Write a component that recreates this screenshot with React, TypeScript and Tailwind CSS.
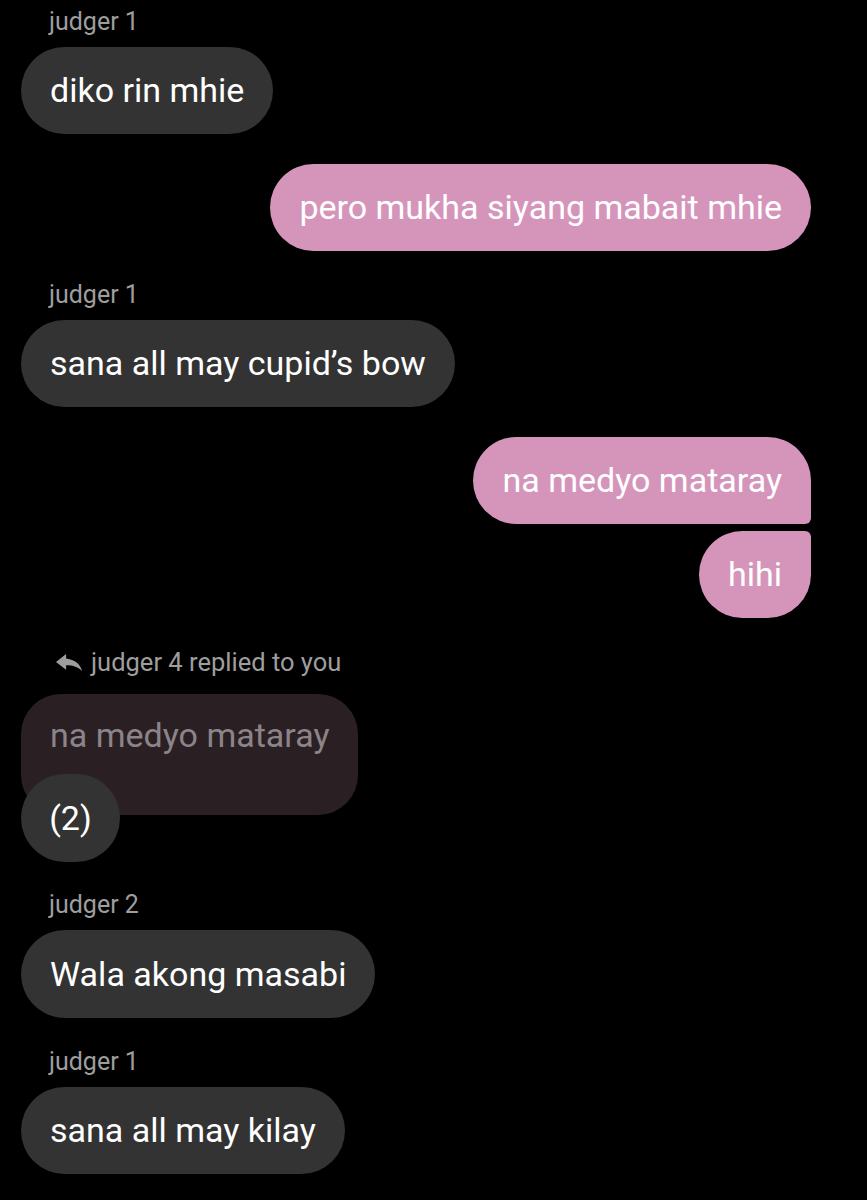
import React from 'react';

const Label = ({ children }: { children: React.ReactNode }) => (
  <div className="pl-[49px] text-[25px] leading-[28px] text-[#9e9e9e]">{children}</div>
);

const InBubble = ({ text, tall }: { text: string; tall?: boolean }) => (
  <div className={`self-start ml-[21px] flex items-center px-[29px] rounded-[44px] bg-[#333333] text-white text-[34px] whitespace-nowrap ${tall ? 'h-[88px]' : 'h-[87px]'}`}>
    {text}
  </div>
);

const OutBubble = ({ text, shape }: { text: string; shape?: 'first' | 'last' }) => {
  const corners =
    shape === 'first'
      ? 'rounded-[44px] rounded-br-[6px]'
      : shape === 'last'
        ? 'rounded-[44px] rounded-tr-[6px]'
        : 'rounded-[44px]';
  return (
    <div className={`self-end mr-[56px] h-[87px] flex items-center px-[29px] bg-[#d595bb] text-white text-[34px] whitespace-nowrap ${corners}`}>
      {text}
    </div>
  );
};

const ReplyIcon = () => (
  <svg width="26" height="17" viewBox="3 5 18 15" preserveAspectRatio="none" fill="#9e9e9e">
    <path d="M10 9V5l-7 7 7 7v-4.1c5 0 8.5 1.6 11 5.1-1-5-4-10-11-11z" />
  </svg>
);

export default function App() {
  return (
    <div className="w-[867px] h-[1200px] bg-black overflow-hidden flex flex-col pt-[8px]" style={{ fontFamily: 'Roboto, "Noto Sans", sans-serif' }}>
      <Label>judger 1</Label>
      <div className="mt-[11px]" />
      <InBubble text="diko rin mhie" />

      <div className="mt-[30px]" />
      <OutBubble text="pero mukha siyang mabait mhie" />

      <div className="mt-[30px]" />
      <Label>judger 1</Label>
      <div className="mt-[11px]" />
      <InBubble text="sana all may cupid’s bow" />

      <div className="mt-[30px]" />
      <OutBubble text="na medyo mataray" shape="first" />
      <div className="mt-[7px]" />
      <OutBubble text="hihi" shape="last" />

      <div className="mt-[30px] pl-[56px] flex items-center gap-[9px] h-[28px] text-[25.5px] text-[#9e9e9e]">
        <ReplyIcon />
        <span>judger 4 replied to you</span>
      </div>
      <div className="mt-[18px] ml-[21px] self-start flex flex-col">
        <div className="w-[337px] h-[121px] rounded-[40px] bg-[#2a2024] px-[29px] pt-[16px] text-[34px] text-[#8c8488] whitespace-nowrap">
          na medyo mataray
        </div>
        <div className="-mt-[41px] h-[88px] w-[99px] flex items-center justify-center rounded-[44px] bg-[#333333] text-white text-[34px]">
          (2)
        </div>
      </div>

      <div className="mt-[29px]" />
      <Label>judger 2</Label>
      <div className="mt-[11px]" />
      <InBubble text="Wala akong masabi" tall />

      <div className="mt-[30px]" />
      <Label>judger 1</Label>
      <div className="mt-[11px]" />
      <InBubble text="sana all may kilay" />
    </div>
  );
}
